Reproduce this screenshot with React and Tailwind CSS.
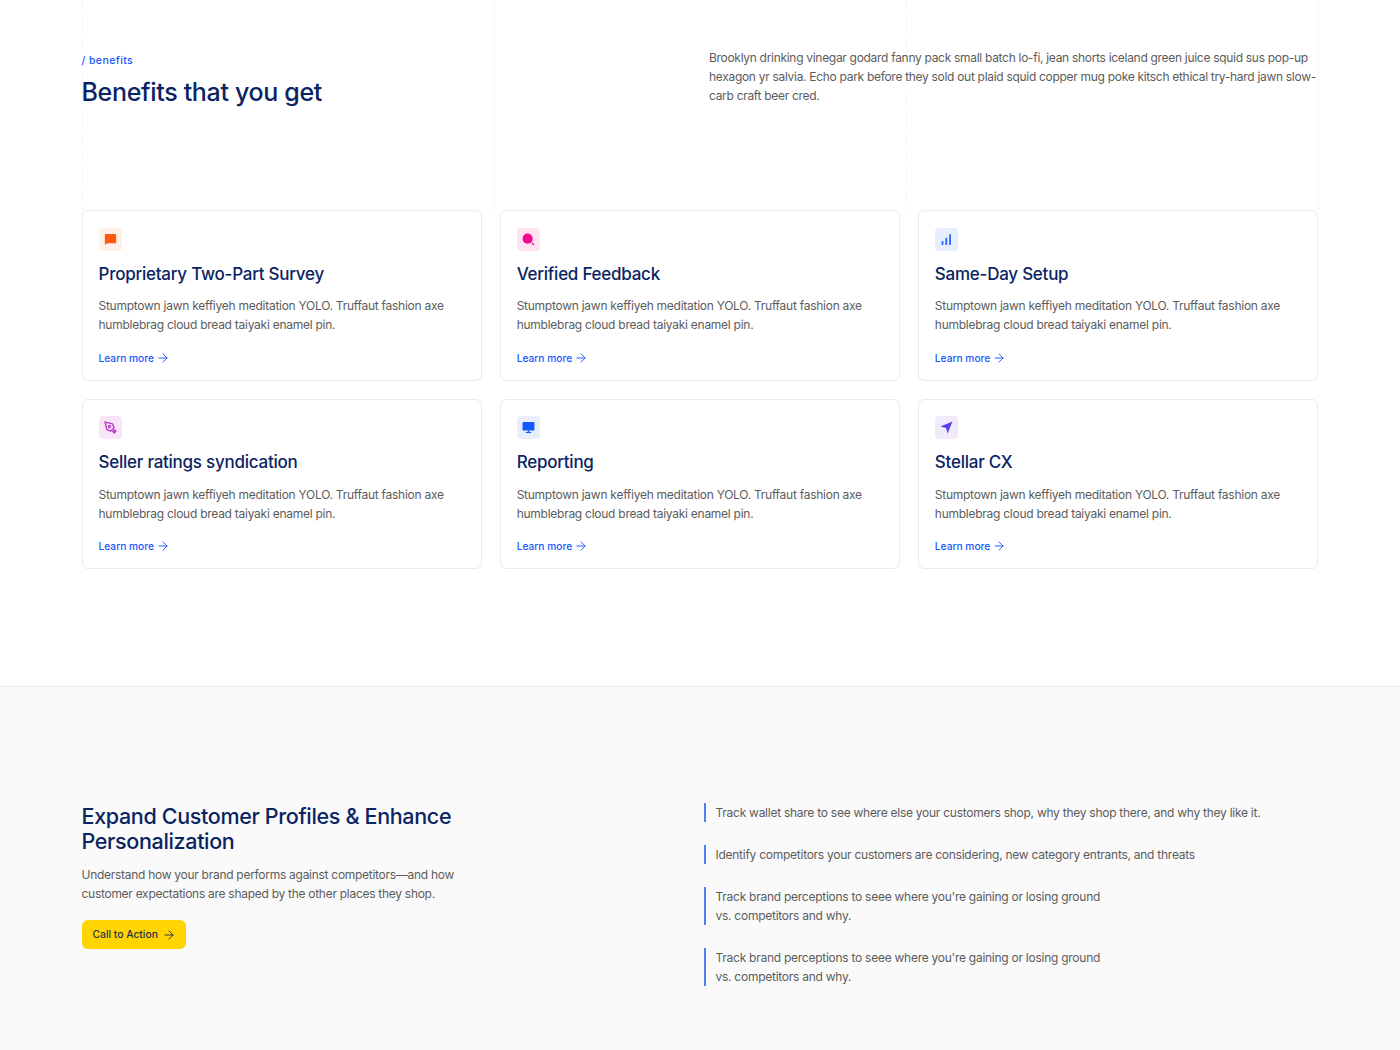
import React from "react";
import { ArrowRight } from "lucide-react";

const cards = [
  {
    title: "Proprietary Two-Part Survey",
    tint: "bg-[#fff0e8]",
    icon: (
      <svg viewBox="0 0 12 12" className="h-[13px] w-[13px]">
        <path d="M.8 1.5C.8 1.2 1 1 1.3 1h9.4c.3 0 .5.2.5.5v7.4c0 .3-.2.5-.5.5H3L.8 11z" fill="#ff5a0a" />
      </svg>
    ),
  },
  {
    title: "Verified Feedback",
    tint: "bg-[#ffe3f3]",
    icon: (
      <svg viewBox="0 0 12 12" className="h-[13px] w-[13px]">
        <circle cx="5.2" cy="5.2" r="4.7" fill="#f00a8c" />
        <path d="M9.2 9.2l1.8 1.8" stroke="#f00a8c" strokeWidth="1.2" />
      </svg>
    ),
  },
  {
    title: "Same-Day Setup",
    tint: "bg-[#e7effe]",
    icon: (
      <svg viewBox="0 0 12 12" className="h-[13px] w-[13px]">
        <rect x="1.5" y="7.5" width="1.6" height="3.5" fill="#1f62f5" />
        <rect x="5" y="4.5" width="1.6" height="6.5" fill="#1f62f5" />
        <rect x="8.5" y="1.2" width="1.6" height="9.8" fill="#1f62f5" />
      </svg>
    ),
  },
  {
    title: "Seller ratings syndication",
    tint: "bg-[#f8e6f8]",
    icon: (
      <svg viewBox="0 0 12 12" className="h-[13px] w-[13px]" fill="none" stroke="#b93fc9" strokeWidth="1.3">
        <path d="M1 1l6.8 1.6 1.5 3.6-3.1 3.1-3.6-1.5z" />
        <circle cx="5" cy="5" r="1" />
        <path d="M8.2 9.8l1.6-1.6 1.2 1.2-1.6 1.6z" fill="#b93fc9" />
      </svg>
    ),
  },
  {
    title: "Reporting",
    tint: "bg-[#e7effe]",
    icon: (
      <svg viewBox="0 0 12 12" className="h-[13px] w-[13px]">
        <rect x="0.5" y="1" width="11" height="7.8" rx="0.8" fill="#1557ff" />
        <path d="M5.2 8.8h1.6v1.4H5.2zM3.5 10.2h5v.9h-5z" fill="#1557ff" />
      </svg>
    ),
  },
  {
    title: "Stellar CX",
    tint: "bg-[#f1eafd]",
    icon: (
      <svg viewBox="0 0 12 12" className="h-[13px] w-[13px]">
        <path d="M11.5.5L7 11.5 5.6 6.4.5 5z" fill="#5b3fe6" />
      </svg>
    ),
  },
];

const points = [
  ["Track wallet share to see where else your customers shop, why they shop there, and why they like it."],
  ["Identify competitors your customers are considering, new category entrants, and threats"],
  ["Track brand perceptions to seee where you're gaining or losing ground", "vs. competitors and why."],
  ["Track brand perceptions to seee where you're gaining or losing ground", "vs. competitors and why."],
];

function BenefitCard({ card }) {
  return (
    <div className="h-[170.5px] rounded-md border border-[#ebebeb] bg-white px-[16px] pt-[16.5px]">
      <div className={`flex h-[23px] w-[23px] items-center justify-center rounded-[4px] ${card.tint}`}>
        {card.icon}
      </div>
      <h3 className="mt-[11px] text-[17px] leading-[24px] font-medium tracking-[-0.25px] text-[#0a2463]">
        {card.title}
      </h3>
      <p className="mt-[10.5px] text-[12px] leading-[19px] tracking-[-0.26px] text-[#5c5c5c]">
        Stumptown jawn keffiyeh meditation YOLO. Truffaut fashion axe
        <br />
        humblebrag cloud bread taiyaki enamel pin.
      </p>
      <a className="mt-[16.5px] flex items-center gap-[2px] text-[10.2px] leading-[14px] font-medium text-[#1557ff]">
        Learn more
        <ArrowRight className="h-[14px] w-[14px]" strokeWidth={1.6} />
      </a>
    </div>
  );
}

export default function App() {
  return (
    <div className="min-h-[1050px] bg-white font-['Inter',sans-serif]">
      <section className="h-[686px] pr-[82px] pl-[81.5px]">
        <div className="relative h-[210px]">
          {/* dotted guide lines behind the header */}
          <div className="absolute inset-y-0 left-0 -right-px grid grid-cols-3 border-r border-dashed border-[#f3f3f3]">
            <div className="border-l border-dashed border-[#f3f3f3]" />
            <div className="border-l border-dashed border-[#f3f3f3]" />
            <div className="border-l border-dashed border-[#f3f3f3]" />
          </div>
          <div className="relative flex justify-between pt-[48px]">
            <div>
              <p className="pt-[6px] text-[10.5px] leading-[14px] font-medium tracking-[0.4px] text-[#1557ff]">
                / benefits
              </p>
              <h1 className="mt-[8px] text-[25px] leading-[32px] font-medium tracking-[-0.33px] text-[#0a2463]">
                Benefits that you get
              </h1>
            </div>
            <p className="w-[609px] text-[12px] leading-[19px] tracking-[-0.3px] whitespace-nowrap text-[#5c5c5c]">
              Brooklyn drinking vinegar godard fanny pack small batch lo-fi, jean shorts iceland green juice squid sus pop-up
              <br />
              hexagon yr salvia. Echo park before they sold out plaid squid copper mug poke kitsch ethical try-hard jawn slow-
              <br />
              carb craft beer cred.
            </p>
          </div>
        </div>
        <div className="grid grid-cols-3 gap-[18px]">
          {cards.map((card) => (
            <BenefitCard key={card.title} card={card} />
          ))}
        </div>
      </section>

      <section className="flex h-[364px] border-t border-[#e8e8e8] bg-[#fafafa] pr-[82px] pl-[81.5px] pt-[116px]">
        <div className="w-[622px] pt-[1px]">
          <h2 className="text-[21.5px] leading-[25px] font-medium tracking-[-0.34px] text-[#0a2463]">
            Expand Customer Profiles &amp; Enhance
            <br />
            Personalization
          </h2>
          <p className="mt-[10.5px] text-[12px] leading-[19px] tracking-[-0.28px] text-[#5c5c5c]">
            Understand how your brand performs against competitors—and how
            <br />
            customer expectations are shaped by the other places they shop.
          </p>
          <button
            type="button"
            className="mt-[17.5px] flex h-[29px] items-center gap-[4px] rounded-md bg-[#ffd400] pr-[10px] pl-[11px] text-[10.3px] font-medium text-[#26314f]"
          >
            Call to Action
            <ArrowRight className="h-[14px] w-[14px]" strokeWidth={1.6} />
          </button>
        </div>
        <div className="flex flex-col gap-[23px]">
          {points.map((lines, i) => (
            <p key={i} className="border-l-2 border-[#4f7ff0] pl-[10px] text-[12px] leading-[19px] tracking-[-0.26px] text-[#5c5c5c]">
              {lines.map((line, j) => (
                <span key={j} className="block">
                  {line}
                </span>
              ))}
            </p>
          ))}
        </div>
      </section>
    </div>
  );
}
